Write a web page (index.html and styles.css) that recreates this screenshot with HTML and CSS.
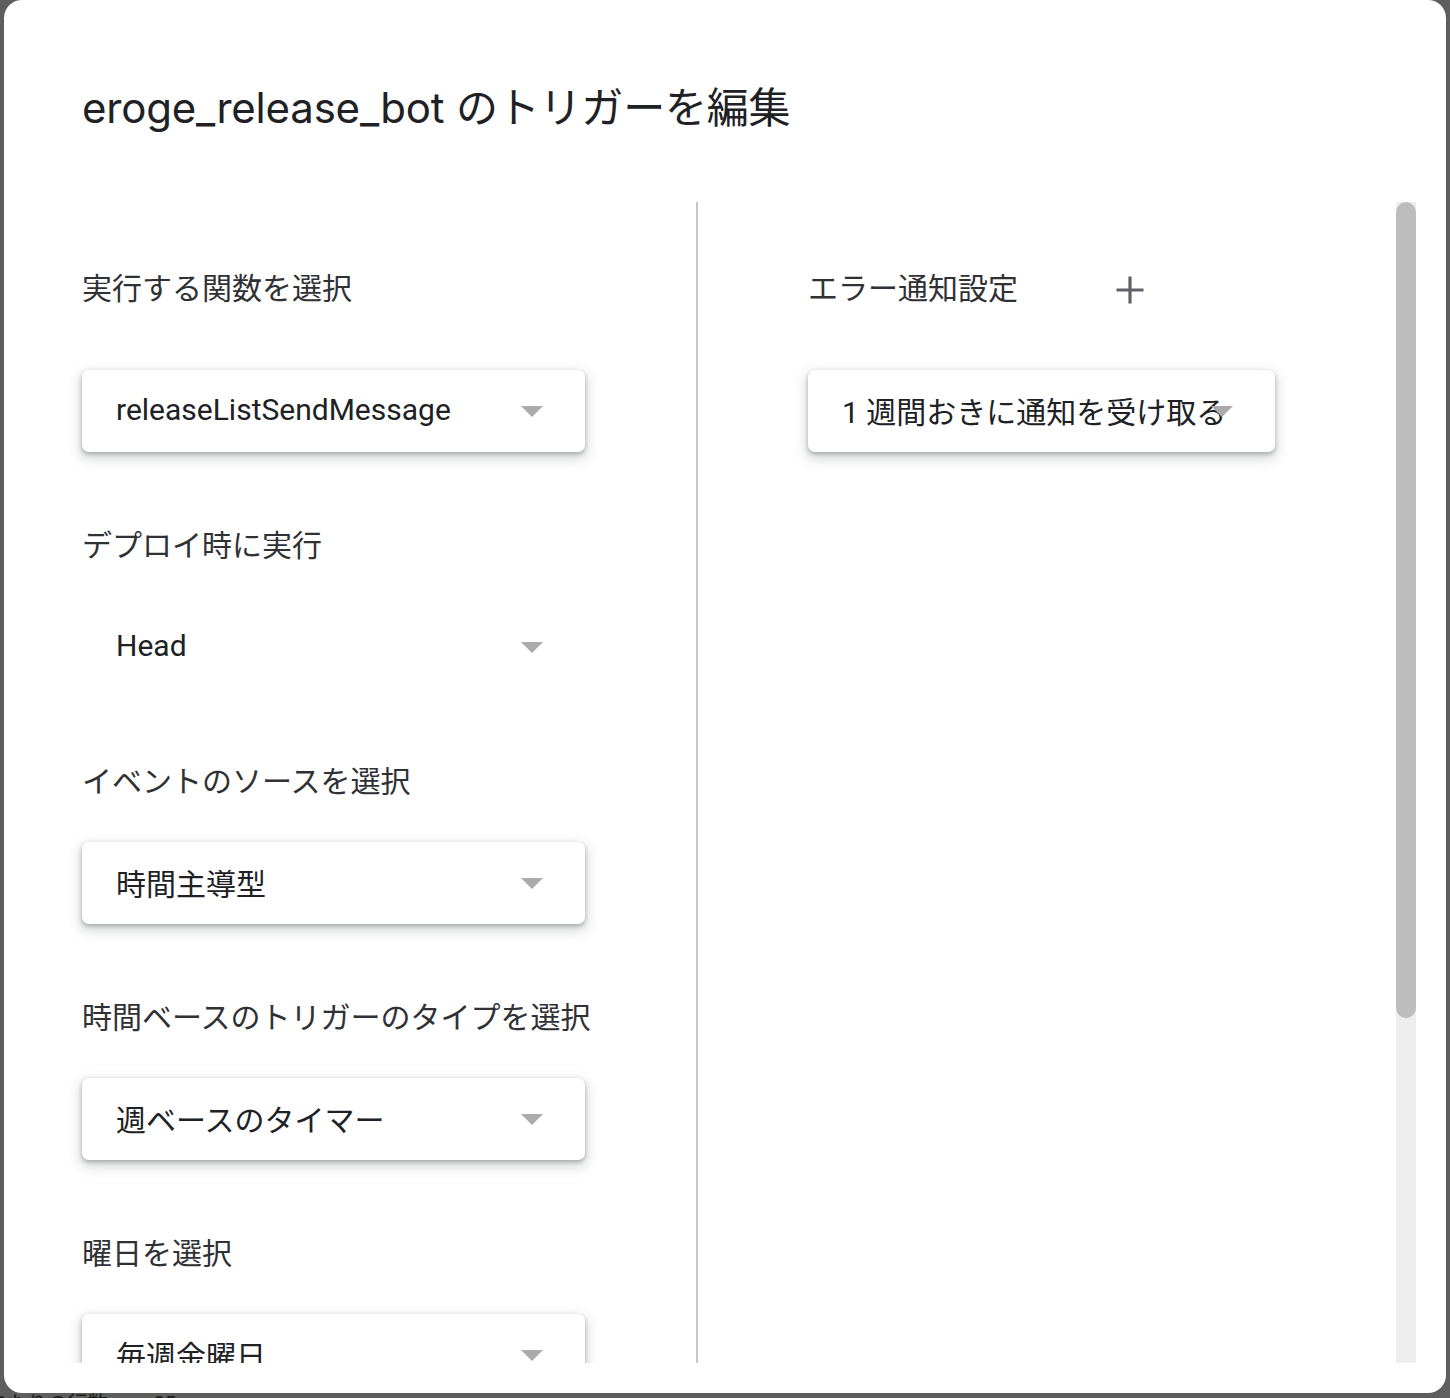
FILE: index.html
```html
<!DOCTYPE html>
<html lang="ja">
<head>
<meta charset="utf-8">
<title>eroge_release_bot のトリガーを編集</title>
<link rel="stylesheet" href="styles.css">
</head>
<body>
<div class="dialog">
  <h1 class="title">eroge_release_bot のトリガーを編集</h1>
  <div class="content">
    <div class="col left">
      <div class="field first">
        <div class="label">実行する関数を選択</div>
        <div class="select"><span class="value">releaseListSendMessage</span><span class="arrow"></span></div>
      </div>
      <div class="field">
        <div class="label">デプロイ時に実行</div>
        <div class="select plain"><span class="value">Head</span><span class="arrow"></span></div>
      </div>
      <div class="field">
        <div class="label">イベントのソースを選択</div>
        <div class="select"><span class="value">時間主導型</span><span class="arrow"></span></div>
      </div>
      <div class="field">
        <div class="label">時間ベースのトリガーのタイプを選択</div>
        <div class="select"><span class="value">週ベースのタイマー</span><span class="arrow"></span></div>
      </div>
      <div class="field">
        <div class="label">曜日を選択</div>
        <div class="select"><span class="value">毎週金曜日</span><span class="arrow"></span></div>
      </div>
    </div>
    <div class="divider"></div>
    <div class="col right">
      <div class="label-row">
        <div class="label">エラー通知設定</div>
        <button class="add" type="button" aria-label="追加">
          <svg width="30" height="30" viewBox="0 0 30 30"><path d="M15 1.5v27M1.5 15h27" stroke="#5f6368" stroke-width="3.2" fill="none"/></svg>
        </button>
      </div>
      <div class="select"><span class="value">1 週間おきに通知を受け取る</span><span class="arrow"></span></div>
    </div>
    <div class="scrollbar"><div class="thumb"></div></div>
  </div>
</div>
<div class="under"><span class="rows">ページあたりの行数</span><span class="count">25</span></div>
</body>
</html>
```

FILE: styles.css
```css
* {
  box-sizing: border-box;
}

html, body {
  margin: 0;
  height: 1398px;
  overflow: hidden;
}

body {
  background: #5d5e5d;
  font-family: Roboto, "Noto Sans CJK JP", sans-serif;
}

.dialog {
  margin: 0 4px;
  height: 1393px;
  background: #ffffff;
  border-radius: 18px;
  display: flex;
  flex-direction: column;
  overflow: hidden;
  padding-bottom: 30px;
}

.title {
  margin: 0;
  flex: none;
  height: 202px;
  padding: 82px 0 0 78px;
  font-size: 42px;
  line-height: 52px;
  font-weight: 400;
  color: #202124;
  font-family: Inter, "Noto Sans CJK JP", sans-serif;
  letter-spacing: -0.2px;
}

.content {
  flex: 1;
  display: flex;
  padding-left: 78px;
  overflow: hidden;
  min-height: 0;
}

.col {
  flex: none;
  padding-top: 67px;
}

.left {
  width: 503px;
}

.right {
  width: 467px;
  margin-left: 110px;
}

.label {
  font-size: 30px;
  line-height: 40px;
  color: #303134;
  white-space: nowrap;
  margin-bottom: 40px;
}

.field {
  margin-bottom: 74px;
}

.field.first .label {
  margin-bottom: 61px;
}

.select {
  position: relative;
  height: 82px;
  display: flex;
  align-items: center;
  padding-left: 34px;
  padding-bottom: 3px;
  background: #ffffff;
  border-radius: 7px;
  box-shadow: 0 2px 4px rgba(60, 64, 67, 0.35), 0 5px 12px 3px rgba(60, 64, 67, 0.18);
  font-size: 30px;
  color: #202124;
  white-space: nowrap;
}

.select.plain {
  box-shadow: none;
  background: transparent;
}

.arrow {
  position: absolute;
  right: 42px;
  top: 50%;
  margin-top: -5px;
  width: 0;
  height: 0;
  border-left: 11px solid transparent;
  border-right: 11px solid transparent;
  border-top: 11px solid #ababab;
}

.divider {
  flex: none;
  width: 2px;
  margin-left: 111px;
  background: #c4c7c9;
}

.label-row {
  display: flex;
  align-items: center;
  height: 40px;
  margin-bottom: 61px;
}

.label-row .label {
  margin-bottom: 0;
  width: 298px;
  flex: none;
}

.add {
  width: 48px;
  height: 48px;
  padding: 0;
  border: none;
  background: transparent;
  display: flex;
  align-items: center;
  justify-content: center;
  margin-top: 2px;
}

.scrollbar {
  flex: none;
  width: 20px;
  margin-left: auto;
  margin-right: 30px;
  background: #eeeeee;
}

.thumb {
  height: 816px;
  background: #bdbdbd;
  border-radius: 10px;
}

.under {
  height: 5px;
  overflow: hidden;
  font-size: 20px;
  line-height: 22px;
  color: #1a1a1a;
  white-space: nowrap;
  margin-left: -72px;
  font-family: Roboto, "Noto Sans CJK JP", sans-serif;
}

.count {
  margin-left: 46px;
}
```
